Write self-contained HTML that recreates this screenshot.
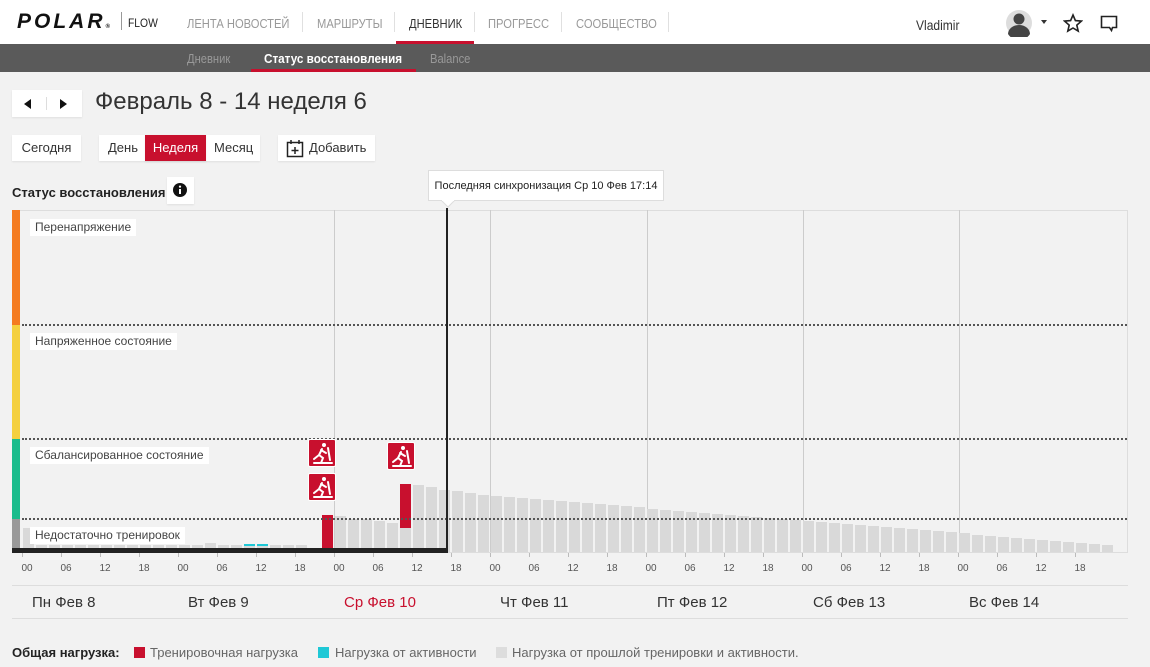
<!DOCTYPE html>
<html><head><meta charset="utf-8">
<style>
*{margin:0;padding:0;box-sizing:border-box}
body{width:1150px;height:667px;overflow:hidden;background:#f2f2f2;font-family:"Liberation Sans",sans-serif;color:#333;position:relative}
.a{position:absolute}
.c{transform:scaleX(.86);transform-origin:0 0;white-space:nowrap}
.top{left:0;top:0;width:1150px;height:44px;background:#fff}
.sub{left:0;top:44px;width:1150px;height:28px;background:#5a5a5a}
.nav{top:16px;font-size:13px;color:#999}
.sep{top:12px;width:1px;height:20px;background:#e0e0e0}
.btn{background:#fff;height:26px;font-size:13px;line-height:26px;text-align:center;box-shadow:0 1px 2px rgba(0,0,0,.08)}
.lab{background:#fff;font-size:12px;color:#444;padding:0 5px;height:17px;line-height:17px}
.tick{top:563px;font-size:10px;color:#555;width:20px;text-align:center}
.day{top:594px;font-size:15px;color:#333;white-space:nowrap}
.dot{height:0;border-top:2px dotted #555}
.vl{top:210px;width:1px;height:342px;background:#ccc}
.ic{width:28px;height:28px;background:#c8102e;border:1px solid #fff;border-radius:2px}
</style></head><body>
<div class="a top"></div>
<div class="a" style="left:17px;top:10px;font:italic 900 21px 'Liberation Sans',sans-serif;letter-spacing:3px;color:#111">POLAR<span style="font-size:6px;letter-spacing:0">®</span></div>
<div class="a" style="left:121px;top:12px;width:1px;height:18px;background:#999"></div>
<div class="a c" style="left:128px;top:16px;font-size:12px;color:#222">FLOW</div>
<div class="a nav c" style="left:187px">ЛЕНТА НОВОСТЕЙ</div>
<div class="a sep" style="left:302px"></div>
<div class="a nav c" style="left:317px">МАРШРУТЫ</div>
<div class="a sep" style="left:394px"></div>
<div class="a nav c" style="left:409px;color:#333">ДНЕВНИК</div>
<div class="a" style="left:396px;top:41px;width:78px;height:3px;background:#c8102e"></div>
<div class="a sep" style="left:474px"></div>
<div class="a nav c" style="left:488px">ПРОГРЕСС</div>
<div class="a sep" style="left:561px"></div>
<div class="a nav c" style="left:576px">СООБЩЕСТВО</div>
<div class="a sep" style="left:668px"></div>
<div class="a c" style="left:916px;top:17px;font-size:14px;color:#333">Vladimir</div>
<svg class="a" style="left:1005px;top:9px" width="50" height="28"><circle cx="14" cy="14" r="13" fill="#ddd"/><circle cx="14" cy="10" r="5.5" fill="#444"/><path d="M3 25a11 9 0 0 1 22 0a13 13 0 0 1-22 0z" fill="#444"/><path d="M36 11h6l-3 4z" fill="#333"/></svg>
<svg class="a" style="left:1063px;top:13px" width="20" height="20"><path d="M10 2l2.4 5.6 6 .5-4.6 4 1.4 6L10 15l-5.2 3.1 1.4-6-4.6-4 6-.5z" fill="none" stroke="#222" stroke-width="1.6"/></svg>
<svg class="a" style="left:1100px;top:15px" width="20" height="18"><path d="M1.5 1.5h15v11h-4l-1 3-2-3h-8z" fill="none" stroke="#222" stroke-width="1.6"/></svg>
<div class="a sub"></div>
<div class="a c" style="left:187px;top:51px;font-size:13px;color:#999">Дневник</div>
<div class="a c" style="left:264px;top:51px;font-size:13px;color:#fff;font-weight:bold;transform:scaleX(.9)">Статус восстановления</div>
<div class="a" style="left:251px;top:69px;width:165px;height:3px;background:#c8102e"></div>
<div class="a c" style="left:430px;top:51px;font-size:13px;color:#999">Balance</div>

<div class="a btn" style="left:12px;top:90px;width:70px;height:27px"></div>
<div class="a" style="left:46px;top:97px;width:1px;height:13px;background:#ddd"></div>
<svg class="a" style="left:22px;top:97px" width="60" height="14"><path d="M2 7l7-5v10z M38 2l7 5-7 5z" fill="#111"/></svg>
<div class="a" style="left:95px;top:88px;font-size:24px;color:#333">Февраль 8 - 14 неделя 6</div>
<div class="a btn" style="left:12px;top:135px;width:69px">Сегодня</div>
<div class="a btn" style="left:99px;top:135px;width:161px"></div>
<div class="a" style="left:108px;top:135px;font-size:13px;line-height:26px">День</div>
<div class="a btn" style="left:145px;top:135px;width:61px;background:#c8102e;color:#fff">Неделя</div>
<div class="a" style="left:214px;top:135px;font-size:13px;line-height:26px">Месяц</div>
<div class="a btn" style="left:278px;top:135px;width:97px"></div>
<svg class="a" style="left:286px;top:139px" width="18" height="19"><rect x="1.5" y="3.5" width="15" height="14" fill="none" stroke="#222" stroke-width="1.5"/><path d="M5 1v4M13 1v4M9 8v7M5.5 11.5h7" stroke="#222" stroke-width="1.5"/></svg>
<div class="a" style="left:309px;top:135px;font-size:13px;line-height:26px">Добавить</div>
<div class="a" style="left:12px;top:185px;font-size:13px;font-weight:bold;color:#222">Статус восстановления</div>
<div class="a btn" style="left:167px;top:177px;width:27px;height:27px"></div>
<svg class="a" style="left:172px;top:182px" width="16" height="16"><circle cx="8" cy="8" r="7" fill="#111"/><rect x="7" y="7" width="2" height="5" fill="#fff"/><circle cx="8" cy="4.6" r="1.1" fill="#fff"/></svg>

<div class="a" style="left:12px;top:210px;width:1116px;height:343px;border:1px solid #ddd;border-left:0"></div>
<div class="a" style="left:12px;top:210px;width:8px;height:115px;background:#f47b20"></div>
<div class="a" style="left:12px;top:325px;width:8px;height:114px;background:#f4d03f"></div>
<div class="a" style="left:12px;top:439px;width:8px;height:80px;background:#1abc8c"></div>
<div class="a" style="left:12px;top:519px;width:8px;height:33px;background:#999"></div>
<div class="a vl" style="left:334px"></div><div class="a vl" style="left:490px"></div><div class="a vl" style="left:647px"></div><div class="a vl" style="left:803px"></div><div class="a vl" style="left:959px"></div>
<div id="bars"></div>
<div class="a dot" style="left:22px;top:324px;width:1105px"></div>
<div class="a dot" style="left:22px;top:438px;width:1105px"></div>
<div class="a dot" style="left:22px;top:518px;width:1105px"></div>
<div class="a lab" style="left:30px;top:219px">Перенапряжение</div>
<div class="a lab" style="left:30px;top:333px">Напряженное состояние</div>
<div class="a lab" style="left:30px;top:447px">Сбалансированное состояние</div>
<div class="a lab" style="left:30px;top:527px">Недостаточно тренировок</div>
<div class="a" style="left:12px;top:548px;width:436px;height:5px;background:#222"></div>
<div class="a" style="left:446px;top:208px;width:2px;height:344px;background:#222"></div>
<div class="a" style="left:428px;top:170px;width:236px;height:31px;background:#fff;border:1px solid #ddd;font-size:11px;line-height:30px;text-align:center;color:#222">Последняя синхронизация Ср 10 Фев 17:14</div>
<svg class="a" style="left:441px;top:200px" width="14" height="8"><path d="M0 0l7 7 7-7" fill="#fff" stroke="#ddd"/><path d="M1 0h12" stroke="#fff" stroke-width="2"/></svg>
<div class="a ic" style="left:308px;top:439px"></div>
<div class="a ic" style="left:308px;top:473px"></div>
<div class="a ic" style="left:387px;top:442px"></div>
<svg class="a" style="left:308px;top:439px" width="108" height="64"><g id="g" fill="none" stroke="#fff" stroke-width="2.5" stroke-linecap="round"><circle cx="16" cy="6" r="2" fill="#fff" stroke="none"/><path d="M14 10l-3 6 4 3-2 5M11 16l-5 4M13 11l5 3M20 9l2 12M6 24h18" stroke-width="2"/></g><use href="#g" y="34"/><use href="#g" x="79" y="3"/></svg>
<div id="ticks"></div>
<div class="a" style="left:12px;top:585px;width:1116px;height:1px;background:#ddd"></div>
<div class="a" style="left:12px;top:618px;width:1116px;height:1px;background:#ddd"></div>
<div class="a day" style="left:32px">Пн Фев 8</div>
<div class="a day" style="left:188px">Вт Фев 9</div>
<div class="a day" style="left:344px;color:#c8102e">Ср Фев 10</div>
<div class="a day" style="left:500px">Чт Фев 11</div>
<div class="a day" style="left:657px">Пт Фев 12</div>
<div class="a day" style="left:813px">Сб Фев 13</div>
<div class="a day" style="left:969px">Вс Фев 14</div>
<div class="a" style="left:12px;top:645px;font-size:13px;font-weight:bold;color:#222">Общая нагрузка:</div>
<div class="a" style="left:134px;top:647px;width:11px;height:11px;background:#c8102e"></div>
<div class="a" style="left:150px;top:645px;font-size:13px;color:#666">Тренировочная нагрузка</div>
<div class="a" style="left:318px;top:647px;width:11px;height:11px;background:#1fc8d6"></div>
<div class="a" style="left:335px;top:645px;font-size:13px;color:#666">Нагрузка от активности</div>
<div class="a" style="left:496px;top:647px;width:11px;height:11px;background:#ddd"></div>
<div class="a" style="left:512px;top:645px;font-size:13px;color:#666">Нагрузка от прошлой тренировки и активности.</div>
<script>
(function(){
var h='',t;
for(var i=0;i<84;i++){
if(i==0)t=528;else if(i<23)t=(i==14?543:(i==22?548:545));
else if(i==23)t=515;else if(i<29)t=[516,519,519,521,523][i-24];
else if(i==29)t=528;else if(i<36)t=[485,487,490,491,493,495][i-30];
else t=Math.round(495+(i-35)*1.04);
var x=22+i*13+1;
h+='<div class="a" style="left:'+x+'px;top:'+t+'px;width:11px;height:'+(552-t)+'px;background:#d9d9d9"></div>';
if(i==23||i==29)h+='<div class="a" style="left:'+x+'px;top:'+(i==23?515:484)+'px;width:11px;height:'+(i==23?33:44)+'px;background:#c8102e"></div>';
if(i==17||i==18)h+='<div class="a" style="left:'+x+'px;top:544px;width:11px;height:2px;background:#1fc8d6"></div>';}
document.getElementById('bars').innerHTML=h;
var s='',l=['00','06','12','18'];
for(var k=0;k<28;k++){var x=22+k*39;s+='<div class="a tick" style="left:'+(x-5)+'px">'+l[k%4]+'</div><div class="a" style="left:'+x+'px;top:553px;width:1px;height:4px;background:#bbb"></div>';}
document.getElementById('ticks').innerHTML=s;
})();
</script>
</body></html>
